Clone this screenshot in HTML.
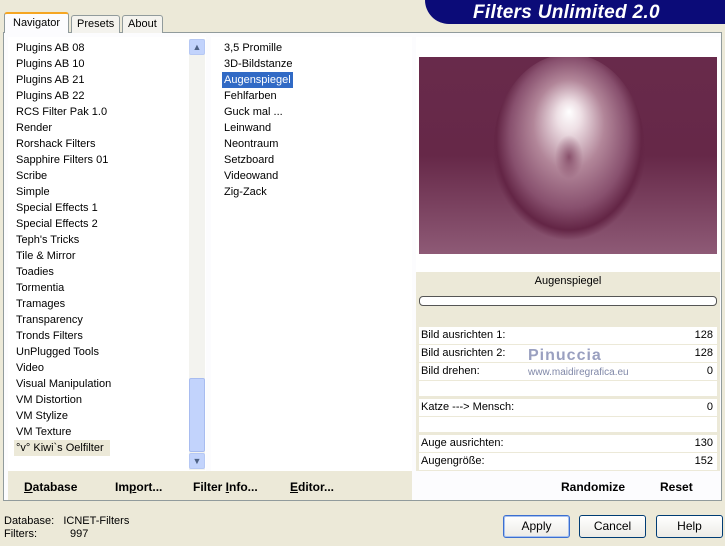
<!DOCTYPE html>
<html><head><meta charset="utf-8"><style>
*{margin:0;padding:0;box-sizing:border-box}
body{width:725px;height:546px;background:#ece9d8;font-family:"Liberation Sans",sans-serif;font-size:11px;color:#000;position:relative;overflow:hidden}
.abs{position:absolute}
.tab{position:absolute;top:15px;height:18px;border:1px solid #919b9c;border-bottom:none;background:#f4f3ee;padding:2px 5px;font-size:11px;border-radius:3px 3px 0 0}
.list div{height:16px;line-height:16px;padding-left:8px;white-space:nowrap}
.btn{position:absolute;font-weight:bold;font-size:12px;top:480px}
.row{position:absolute;left:419px;width:298px;height:17px;background:#fff;line-height:17px;padding:0 4px 0 2px}
.row span{float:right}
.pb{position:absolute;top:515px;width:67px;height:23px;border:1px solid #003c74;border-radius:3px;background:linear-gradient(#fff,#ecebe6);text-align:center;line-height:21px;font-size:12px}
</style></head><body>
<div class="abs" style="left:425px;top:0;width:300px;height:24px;border-bottom-left-radius:24px;background:#0b0b78;color:#fff;font-weight:bold;font-style:italic;font-size:19px;line-height:25px;padding-left:48px;letter-spacing:0.3px">Filters Unlimited 2.0</div>
<div class="abs" style="left:3px;top:32px;width:719px;height:469px;border:1px solid #919b9c;background:#fcfcfe"></div>
<div class="tab" style="left:4px;top:12px;height:21px;background:#fcfcfe;border-top:2px solid #f5a623;z-index:2;padding:3px 8px">Navigator</div>
<div class="tab" style="left:71px">Presets</div>
<div class="tab" style="left:122px">About</div>
<div class="abs" style="left:8px;top:37px;width:198px;height:434px;background:#fff"></div>
<div class="abs list" style="left:8px;top:40px;width:180px">
<div>Plugins AB 08</div><div>Plugins AB 10</div><div>Plugins AB 21</div><div>Plugins AB 22</div><div>RCS Filter Pak 1.0</div><div>Render</div><div>Rorshack Filters</div><div>Sapphire Filters 01</div><div>Scribe</div><div>Simple</div><div>Special Effects 1</div><div>Special Effects 2</div><div>Teph's Tricks</div><div>Tile &amp; Mirror</div><div>Toadies</div><div>Tormentia</div><div>Tramages</div><div>Transparency</div><div>Tronds Filters</div><div>UnPlugged Tools</div><div>Video</div><div>Visual Manipulation</div><div>VM Distortion</div><div>VM Stylize</div><div>VM Texture</div><div style="background:#ece9d8;width:96px;margin-left:6px;padding-left:2px">°v° Kiwi`s Oelfilter</div>
</div>
<div class="abs" style="left:189px;top:39px;width:16px;height:431px;background:#f3f3ef"></div>
<div class="abs" style="left:189px;top:39px;width:16px;height:16px;background:#c2d3fc;border:1px solid #b6c8f4;border-radius:2px;color:#4d6185;font-size:9px;text-align:center;line-height:14px">▲</div>
<div class="abs" style="left:189px;top:378px;width:16px;height:74px;background:#c2d3fc;border:1px solid #a8bcf0;border-radius:2px"></div>
<div class="abs" style="left:189px;top:453px;width:16px;height:16px;background:#c2d3fc;border:1px solid #b6c8f4;border-radius:2px;color:#4d6185;font-size:9px;text-align:center;line-height:14px">▼</div>
<div class="abs" style="left:211px;top:37px;width:201px;height:434px;background:#fff"></div>
<div class="abs list" style="left:216px;top:40px">
<div>3,5 Promille</div><div>3D-Bildstanze</div><div style="background:#316ac5;color:#fff;margin-left:6px;padding-left:2px;width:71px">Augenspiegel</div><div>Fehlfarben</div><div>Guck mal ...</div><div>Leinwand</div><div>Neontraum</div><div>Setzboard</div><div>Videowand</div><div>Zig-Zack</div>
</div>
<div class="abs" style="left:416px;top:37px;width:304px;height:434px;background:#ece9d8"></div>
<div class="abs" style="left:416px;top:37px;width:304px;height:235px;background:#fff"></div>
<svg class="abs" style="left:419px;top:57px" width="298" height="197" viewBox="0 0 298 197">
<defs>
<linearGradient id="bg" x1="0" y1="0" x2="0" y2="1"><stop offset="0" stop-color="#682a4b"/><stop offset="0.5" stop-color="#662848"/><stop offset="1" stop-color="#8e5a76"/></linearGradient>
<radialGradient id="egg" cx="0.5" cy="0.45" r="0.52" fx="0.5" fy="0.3"><stop offset="0" stop-color="#fff"/><stop offset="0.15" stop-color="#eee0e5"/><stop offset="0.45" stop-color="#b28699"/><stop offset="0.75" stop-color="#88506e"/><stop offset="0.92" stop-color="#632545"/><stop offset="1" stop-color="#662848" stop-opacity="0"/></radialGradient>
<radialGradient id="dk" cx="0.5" cy="0.5" r="0.5"><stop offset="0" stop-color="#7a3c5a" stop-opacity="0.8"/><stop offset="1" stop-color="#7a3c5a" stop-opacity="0"/></radialGradient>
</defs>
<rect width="298" height="197" fill="url(#bg)"/>
<ellipse cx="150" cy="93" rx="76" ry="96" fill="url(#egg)"/>
<ellipse cx="150" cy="100" rx="14" ry="22" fill="url(#dk)"/>
</svg>
<div class="abs" style="left:416px;top:275px;width:304px;text-align:center">Augenspiegel</div>
<div class="abs" style="left:419px;top:296px;width:298px;height:10px;border:1px solid #555;border-radius:4px;background:#fff"></div>
<div class="row" style="top:327px">Bild ausrichten 1:<span>128</span></div>
<div class="row" style="top:345px">Bild ausrichten 2:<span>128</span></div>
<div class="row" style="top:363px">Bild drehen:<span>0</span></div>
<div class="row" style="top:381px;height:15px"></div>
<div class="row" style="top:399px">Katze ---&gt; Mensch:<span>0</span></div>
<div class="row" style="top:417px;height:15px"></div>
<div class="row" style="top:435px">Auge ausrichten:<span>130</span></div>
<div class="row" style="top:453px">Augengröße:<span>152</span></div>
<div class="abs" style="left:528px;top:347px;color:#9aa0c0;font-size:16px;font-weight:bold;letter-spacing:1px">Pinuccia</div>
<div class="abs" style="left:528px;top:367px;color:#8088a8;font-size:10px">www.maidiregrafica.eu</div>
<div class="abs" style="left:8px;top:471px;width:404px;height:29px;background:#ece9d8"></div>
<div class="btn" style="left:24px"><u>D</u>atabase</div>
<div class="btn" style="left:115px">Im<u>p</u>ort...</div>
<div class="btn" style="left:193px">Filter <u>I</u>nfo...</div>
<div class="btn" style="left:290px"><u>E</u>ditor...</div>
<div class="btn" style="left:561px">Randomize</div>
<div class="btn" style="left:660px">Reset</div>
<div class="abs" style="left:4px;top:515px;line-height:13px">Database:&nbsp;&nbsp; ICNET-Filters<br>Filters:<span style="padding-left:33px">997</span></div>
<div class="pb" style="left:503px;border-color:#3c6fd0;box-shadow:inset 0 0 0 1px #a6c1f0">Apply</div>
<div class="pb" style="left:579px">Cancel</div>
<div class="pb" style="left:656px">Help</div>
</body></html>
